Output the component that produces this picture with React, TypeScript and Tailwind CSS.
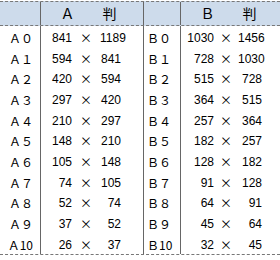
import React from "react";

const A: [string, string, string][] = [
  ["Ａ０", "841", "1189"],
  ["Ａ１", "594", "841"],
  ["Ａ２", "420", "594"],
  ["Ａ３", "297", "420"],
  ["Ａ４", "210", "297"],
  ["Ａ５", "148", "210"],
  ["Ａ６", "105", "148"],
  ["Ａ７", "74", "105"],
  ["Ａ８", "52", "74"],
  ["Ａ９", "37", "52"],
  ["Ａ10", "26", "37"],
];
const B: [string, string, string][] = [
  ["Ｂ０", "1030", "1456"],
  ["Ｂ１", "728", "1030"],
  ["Ｂ２", "515", "728"],
  ["Ｂ３", "364", "515"],
  ["Ｂ４", "257", "364"],
  ["Ｂ５", "182", "257"],
  ["Ｂ６", "128", "182"],
  ["Ｂ７", "91", "128"],
  ["Ｂ８", "64", "91"],
  ["Ｂ９", "45", "64"],
  ["Ｂ10", "32", "45"],
];
const H = [21, 21, 20, 21, 21, 20, 21, 21, 20, 21, 21];

const jp = "font-['Noto_Sans_CJK_JP','Noto_Sans',sans-serif]";
const num = "font-['Liberation_Sans_Narrow','Liberation_Sans',sans-serif] text-[12px]";

export default function App() {
  return (
    <div className="w-[280px] h-[260px] bg-white text-black overflow-hidden">
      <div className="mt-px flex h-[25px] border-y border-dashed border-[#777] bg-[#cddbeb]">
        <div className="w-[41px] border-r border-[#666]" />
        <div className={`w-[103px] border-r border-[#666] flex items-center justify-center pr-[7px] text-[14px] ${jp}`}>
          Ａ　　判
        </div>
        <div className="w-[37px] border-r border-[#666]" />
        <div className={`flex-1 flex items-center justify-center pr-[4px] text-[14px] ${jp}`}>
          Ｂ　　判
        </div>
      </div>
      <div className="flex flex-col border-b border-dashed border-[#777]">
        {A.map((a, i) => {
          const b = B[i];
          return (
            <div key={i} className="flex" style={{ height: H[i] }}>
              <div className={`w-[41px] border-r border-[#666] flex items-center justify-end pr-[7px] pt-[2px] text-[12px] ${jp}`}>
                {a[0]}
              </div>
              <div className={`w-[103px] border-r border-[#666] grid grid-cols-[31px_28px_21px] items-center pt-[2px] ${num}`}>
                <span className="text-right">{a[1]}</span>
                <span className={`text-center ${jp} text-[12px]`}>×</span>
                <span className="text-right">{a[2]}</span>
              </div>
              <div className={`w-[37px] border-r border-[#666] flex items-center pl-[3px] pt-[2px] text-[12px] ${jp}`}>
                {b[0]}
              </div>
              <div className={`flex-1 grid grid-cols-[33px_24px_24px] items-center pt-[2px] ${num}`}>
                <span className="text-right">{b[1]}</span>
                <span className={`text-center ${jp} text-[12px]`}>×</span>
                <span className="text-right">{b[2]}</span>
              </div>
            </div>
          );
        })}
      </div>
    </div>
  );
}
